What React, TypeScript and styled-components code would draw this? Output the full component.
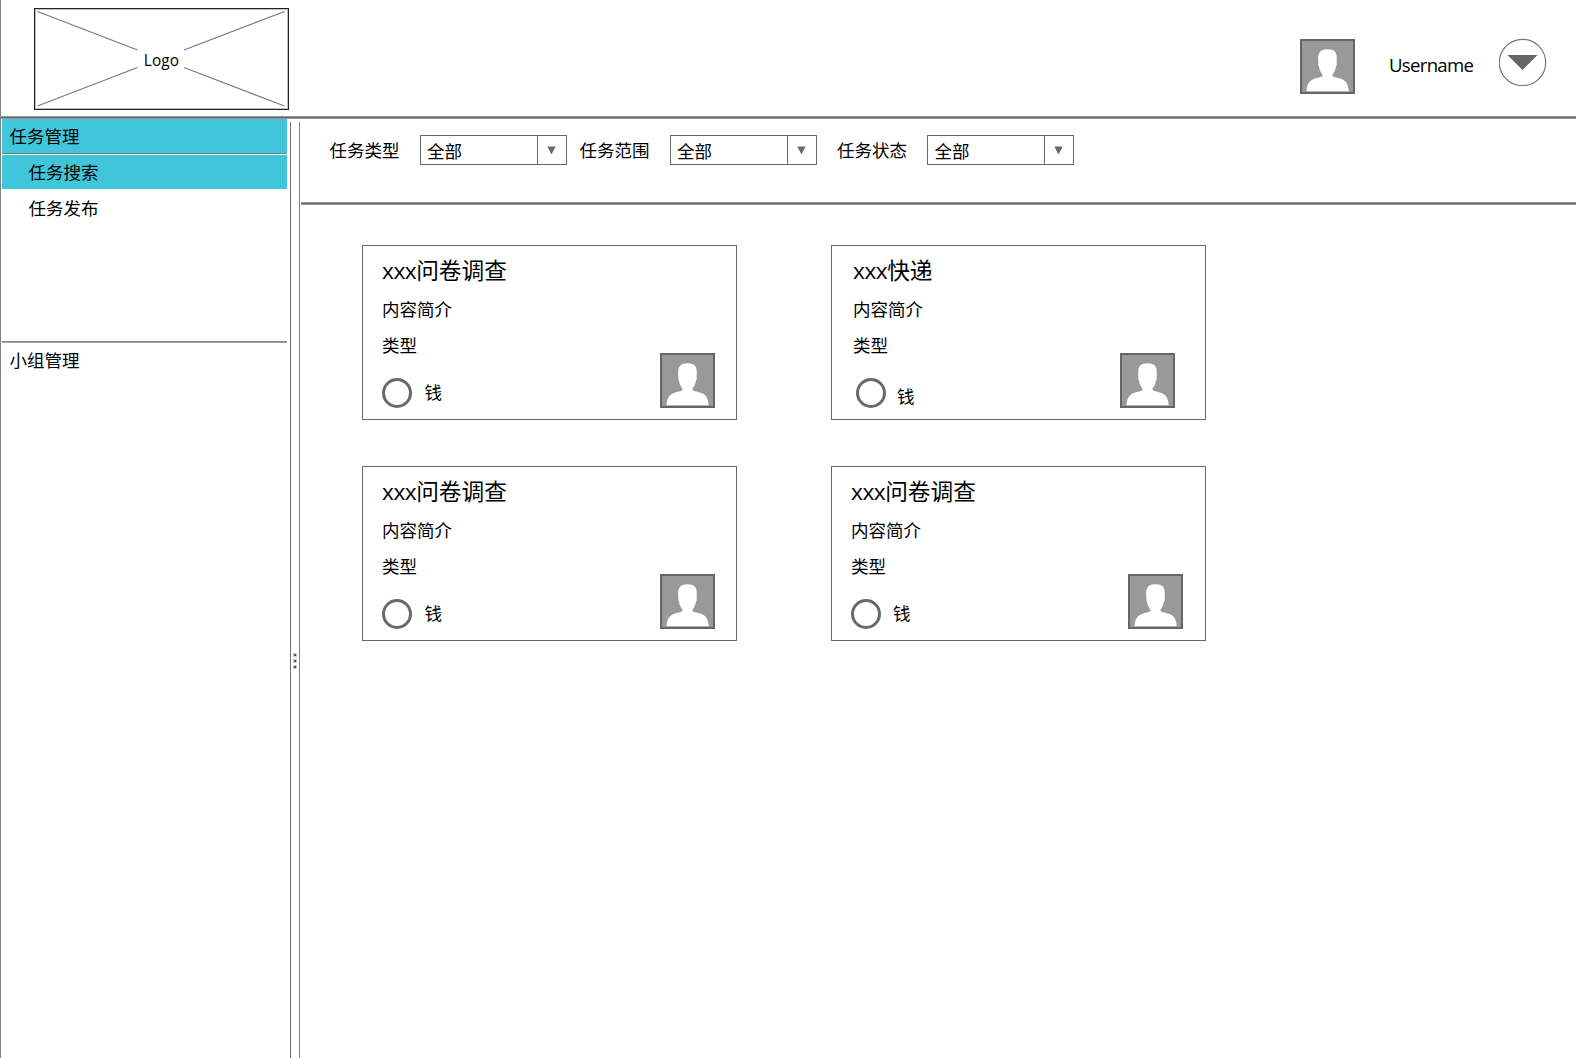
import React from "react";
import styled, { createGlobalStyle } from "styled-components";

const line = "#696969";

const GlobalStyle = createGlobalStyle`
  * { box-sizing: border-box; }
  body {
    margin: 0;
    background: #fff;
    color: #000;
    font-family: "Open Sans", "Noto Sans CJK SC", sans-serif;
    font-size: 17.5px;
    line-height: 24px;
    overflow: hidden;
  }
`;

const Page = styled.div`
  width: 1576px;
  height: 1058px;
  display: flex;
  flex-direction: column;
  border-left: 1px solid #808080;
`;

const Header = styled.header`
  height: 119px;
  flex: none;
  display: flex;
  align-items: flex-start;
  justify-content: space-between;
  padding: 8px 29px 0 33px;
  background: linear-gradient(#999 0 1px, #646464 1px 2px, #999 2px) left bottom / 100% 3px no-repeat;
`;

const LogoBox = styled.div`
  width: 255px;
  height: 102px;
  display: grid;
  place-items: center;
  border: 1px solid #222;
  outline: 1px solid rgba(0, 0, 0, 0.25);
  outline-offset: -2px;
  > * { grid-area: 1 / 1; }
`;

const LogoLines = styled.svg`
  width: 253px;
  height: 100px;
  display: block;
`;

const LogoText = styled.span`
  font-size: 15.4px;
  line-height: 20px;
  letter-spacing: 0.1px;
  padding-top: 3px;
`;

const UserArea = styled.div`
  display: flex;
  align-items: flex-start;
  padding-top: 30px;
`;

const UserAvatar = styled.div`
  padding-top: 1px;
`;

const UserName = styled.span`
  font-size: 18.6px;
  line-height: 26px;
  letter-spacing: -0.7px;
  width: 110px;
  padding: 14px 0 0 34px;
  margin-right: 34px;
`;

const RoundButton = styled.button`
  width: 48px;
  height: 48px;
  padding: 0;
  border: 0;
  background: none;
  svg { display: block; }
`;

const Body = styled.div`
  flex: 1;
  min-height: 0;
  display: flex;
`;

const Sidebar = styled.nav`
  width: 286px;
  flex: none;
  padding-left: 1px;
`;

const NavGroup = styled.div<{ $active?: boolean }>`
  height: 34px;
  padding: 5px 0 0 7.5px;
  background: ${(p) => (p.$active ? "#40c6db" : "transparent")};
`;

const NavRule = styled.div`
  height: 1px;
  background: #777;
  margin-bottom: 1px;
`;

const SectionRule = styled.div`
  height: 2px;
  background: linear-gradient(#8a8a8a 50%, #a0a0a0 50%);
`;

const NavItem = styled.div<{ $active?: boolean }>`
  height: 34px;
  margin-bottom: 2px;
  padding: 5px 0 0 26.5px;
  background: ${(p) => (p.$active ? "#40c6db" : "transparent")};
`;

const NavList = styled.div`
  height: 186px;
`;

const Splitter = styled.div`
  width: 10px;
  flex: none;
  margin: 3px 1px 0 3px;
  border-left: 1px solid #707070;
  border-right: 1px solid #808080;
  display: flex;
  flex-direction: column;
  align-items: center;
  gap: 4px;
  padding-top: 532px;
`;

const Dot = styled.i`
  width: 2px;
  height: 2px;
  flex: none;
  background: #555;
  outline: 0.5px solid #ccc;
`;

const Main = styled.main`
  flex: 1;
  min-width: 0;
`;

const Filters = styled.div`
  height: 86px;
  display: flex;
  align-items: flex-start;
  padding: 16px 0 0 28.5px;
  background: linear-gradient(#999 0 1px, #646464 1px 2px, #999 2px) left bottom / 100% 3px no-repeat;
`;

const Filter = styled.div<{ $gap: number }>`
  display: flex;
  margin-right: ${(p) => p.$gap}px;
`;

const FilterLabel = styled.span`
  width: 90px;
  padding-top: 3px;
`;

const Select = styled.div`
  width: 147px;
  height: 30px;
  display: flex;
  border: 1px solid ${line};
`;

const SelectValue = styled.span`
  flex: 1;
  padding: 3px 0 0 6.5px;
`;

const SelectArrow = styled.span`
  width: 29px;
  border-left: 1px solid ${line};
  display: grid;
  place-items: center;
  padding-right: 1px;
  svg { display: block; }
`;

const Cards = styled.div`
  display: grid;
  grid-template-columns: 375px 375px;
  gap: 46px 94px;
  padding: 40px 0 0 61px;
`;

const Card = styled.article<{ $left: number; $right: number }>`
  height: 175px;
  border: 1px solid ${line};
  padding: 0 ${(p) => p.$right}px 0 ${(p) => p.$left}px;
  display: flex;
  justify-content: space-between;
`;

const CardText = styled.div`
  display: flex;
  flex-direction: column;
  white-space: nowrap;
`;

const Title = styled.h3`
  margin: 10px 0 9px;
  font-size: 22.7px;
  line-height: 30px;
  font-weight: 400;
`;

const Latin = styled.span`
  letter-spacing: -0.5px;
`;

const CardLine = styled.p<{ $last?: boolean }>`
  margin: ${(p) => (p.$last ? "3px 0 10px" : "2px 0 9px")};
`;

const Price = styled.div<{ $indent: number; $gap: number; $drop: number }>`
  display: flex;
  align-items: flex-start;
  gap: ${(p) => p.$gap}px;
  margin: 10.5px 0 0 ${(p) => p.$indent}px;
  span { padding-top: ${(p) => 2.5 + p.$drop}px; }
`;

const Radio = styled.i`
  width: 30px;
  height: 30px;
  border: 3px solid ${line};
  border-radius: 50%;
`;

const AvatarSlot = styled.div`
  padding-top: 106.5px;
`;

const AvatarSvg = styled.svg`
  display: block;
  width: 55px;
  height: 55px;
`;

function Avatar() {
  return (
    <AvatarSvg viewBox="0 0 55 55">
      <rect x="1" y="1" width="53" height="53" fill="#999" stroke="#666" strokeWidth="2" />
      <path
        fill="#fff"
        d="M6.500 52.3C6.900 44.5 10 41.3 15.2 39.6C18.7 38.4 22 38.3 22.6 36.6C22.7 35.3 19.6 32.7 19 27.5C18.3 27 18 25.2 18.4 23.3C17.4 14.4 19.5 10.200 27.500 10.200C35.800 10.200 37.600 14.4 36.600 23.3C37 25.2 36.700 27 36 27.5C35.400 32.7 32.3 35.3 32.400 36.6C33.1 38.3 36.5 38.6 40 39.6C45.5 41.3 48.3 44.5 48.700 52.3Z"
      />
    </AvatarSvg>
  );
}

const filters = [
  { label: "任务类型", value: "全部", gap: 13 },
  { label: "任务范围", value: "全部", gap: 20.5 },
  { label: "任务状态", value: "全部", gap: 0 },
];

const cards = [
  { subject: "问卷调查", left: 19, right: 21.5, indent: 0, gap: 12.5, drop: 0 },
  { subject: "快递", left: 21, right: 30.5, indent: 3, gap: 11, drop: 4 },
  { subject: "问卷调查", left: 19, right: 21.5, indent: 0, gap: 12.5, drop: 0 },
  { subject: "问卷调查", left: 19, right: 22, indent: 0, gap: 12, drop: 0 },
];

export default function App() {
  return (
    <>
      <GlobalStyle />
      <Page>
        <Header>
          <LogoBox>
            <LogoLines viewBox="0 0 253 100" fill="none" stroke="#777" strokeWidth="1.1">
              <path d="M2.500 2.500L102.500 41M249.500 2.500L149 41M2.500 97L102.500 58.500M249.500 97L149 58.500" />
            </LogoLines>
            <LogoText>Logo</LogoText>
          </LogoBox>
          <UserArea>
            <UserAvatar>
              <Avatar />
            </UserAvatar>
            <UserName>Username</UserName>
            <RoundButton aria-label="menu">
              <svg width="48" height="48" viewBox="0 0 48 48">
                <circle cx="23.500" cy="24.500" r="23.200" fill="#fff" stroke="#777" strokeWidth="1.200" />
                <path d="M8.500 17H38.500L23.500 32Z" fill="#666" />
              </svg>
            </RoundButton>
          </UserArea>
        </Header>
        <Body>
          <Sidebar>
            <NavGroup $active>任务管理</NavGroup>
            <NavRule />
            <NavList>
              <NavItem $active>任务搜索</NavItem>
              <NavItem>任务发布</NavItem>
            </NavList>
            <SectionRule />
            <NavGroup>小组管理</NavGroup>
          </Sidebar>
          <Splitter>
            <Dot />
            <Dot />
            <Dot />
          </Splitter>
          <Main>
            <Filters>
              {filters.map((f) => (
                <Filter key={f.label} $gap={f.gap}>
                  <FilterLabel>{f.label}</FilterLabel>
                  <Select>
                    <SelectValue>{f.value}</SelectValue>
                    <SelectArrow>
                      <svg width="9" height="9" viewBox="0 0 9 9">
                        <path d="M0.300 0.500H8.700L4.500 8.500Z" fill={line} />
                      </svg>
                    </SelectArrow>
                  </Select>
                </Filter>
              ))}
            </Filters>
            <Cards>
              {cards.map((c, i) => (
                <Card key={i} $left={c.left} $right={c.right}>
                  <CardText>
                    <Title>
                      <Latin>xxx</Latin>
                      {c.subject}
                    </Title>
                    <CardLine>内容简介</CardLine>
                    <CardLine $last>类型</CardLine>
                    <Price $indent={c.indent} $gap={c.gap} $drop={c.drop}>
                      <Radio />
                      <span>钱</span>
                    </Price>
                  </CardText>
                  <AvatarSlot>
                    <Avatar />
                  </AvatarSlot>
                </Card>
              ))}
            </Cards>
          </Main>
        </Body>
      </Page>
    </>
  );
}
